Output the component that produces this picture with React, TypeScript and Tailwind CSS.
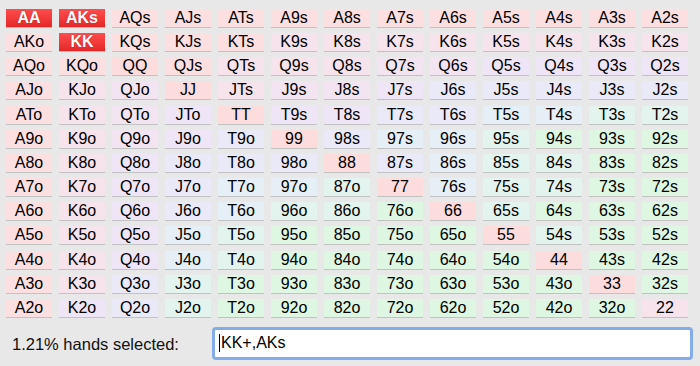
import React from "react";

const RANKS = "AKQJT98765432".split("");

// S = selected, digits = colour level
const MAP: string[] = [
  "SS00000000000",
  "0S00011111111",
  "0000111223333",
  "0120122344444",
  "0123033445566",
  "0123404556777",
  "0134440456677",
  "0134556056677",
  "0134566706777",
  "0135677770677",
  "0135677777077",
  "0146777777707",
  "0346777777771",
];

const LEVEL_BG = [
  "bg-[#fcdfe0]",
  "bg-[#f6e3eb]",
  "bg-[#f2e5f1]",
  "bg-[#eee6f6]",
  "bg-[#e9e9f8]",
  "bg-[#e6eef6]",
  "bg-[#e3f3ee]",
  "bg-[#def7e2]",
];

function handName(i: number, j: number) {
  if (i === j) return RANKS[i] + RANKS[j];
  if (j > i) return RANKS[i] + RANKS[j] + "s";
  return RANKS[j] + RANKS[i] + "o";
}

function Cell({ i, j }: { i: number; j: number }) {
  const code = MAP[i][j];
  const name = handName(i, j);
  if (code === "S") {
    return (
      <div className="h-[18px] flex items-center justify-center bg-gradient-to-b from-[#ff4c4c] to-[#e42727] shadow-[0_1px_0_#bcbcbc] text-white font-bold text-[16px] leading-none [text-shadow:0_0_1px_rgba(120,0,0,0.6)]">
        {name}
      </div>
    );
  }
  const pairBg = i === j && i < 12 ? "bg-[#fcdcdc]" : LEVEL_BG[parseInt(code, 10)];
  return (
    <div
      className={`h-[18px] flex items-center justify-center ${pairBg} shadow-[0_1px_0_#c2c2c2] text-black text-[16px] leading-none`}
    >
      {name}
    </div>
  );
}

export default function App() {
  return (
    <div
      className="w-[700px] h-[366px] bg-[#e8e8e8] overflow-hidden pt-[9px]"
      style={{ fontFamily: '"Liberation Sans", Arial, Helvetica, sans-serif' }}
    >
      <div className="grid grid-cols-[repeat(13,46px)] gap-x-[7px] gap-y-[6.17px] pl-[6px]">
        {RANKS.map((_, i) =>
          RANKS.map((__, j) => <Cell key={`${i}-${j}`} i={i} j={j} />)
        )}
      </div>
      <div className="flex items-center mt-[10px] pl-[12px] pr-[7px]">
        <div className="text-[16.5px] text-[#111] leading-none pt-[2px]">1.21% hands selected:</div>
        <div className="ml-auto w-[481px] h-[33px] rounded-[4px] border-[3px] border-[#84acea] bg-white flex items-center pl-[4px]">
          <span className="inline-block w-[1px] h-[18px] bg-black mr-[1px]" />
          <span className="text-[16px] text-black leading-none">KK+,AKs</span>
        </div>
      </div>
    </div>
  );
}
